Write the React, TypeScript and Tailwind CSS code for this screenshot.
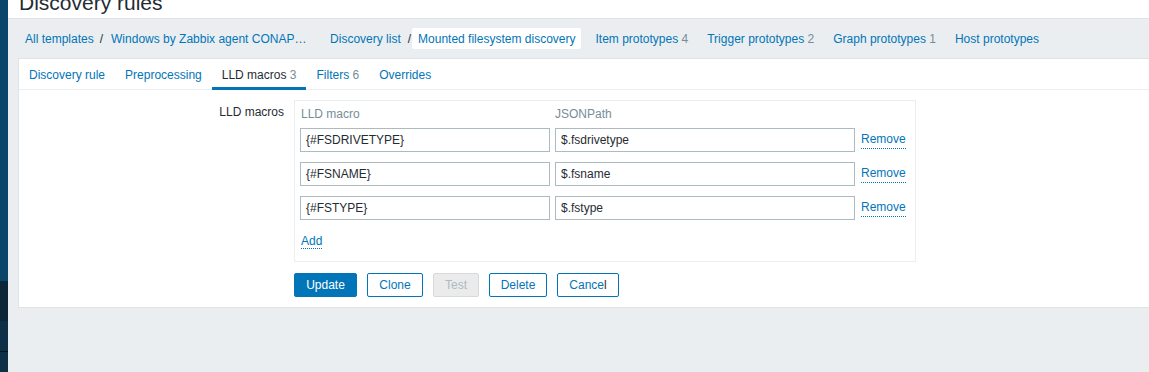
import React from "react";

const Count = ({ n }: { n: string }) => <span className="text-[#768d99]">{"\u00a0"}{n}</span>;

const rows = [
  { macro: "{#FSDRIVETYPE}", path: "$.fsdrivetype" },
  { macro: "{#FSNAME}", path: "$.fsname" },
  { macro: "{#FSTYPE}", path: "$.fstype" },
];

export default function App() {
  return (
    <div className="flex h-[372px] w-[1149px] overflow-hidden font-['Liberation_Sans',Arial,sans-serif] text-[12px] text-[#1f2c33]">
      <aside className="flex w-[8px] shrink-0 flex-col">
        <div className="h-[281px] bg-[#0a466a]" />
        <div className="h-[40px] bg-[#0a2637]" />
        <div className="h-[30px] bg-[#0d3048]" />
        <div className="h-[1px] bg-[#04121b]" />
        <div className="flex-1 bg-[#0d3048]" />
      </aside>
      <main className="flex min-w-0 flex-1 flex-col bg-[#ebeef0]">
        <header className="h-[19px] overflow-hidden border-b border-[#dfe4e7] bg-white pl-[11px]">
          <h1 className="mt-[-8px] whitespace-nowrap text-[21px] leading-[21px] text-[#1f2c33]">Discovery rules</h1>
        </header>
        <nav className="flex h-[39px] items-center whitespace-nowrap pl-[17px] leading-[18px] text-[#0275b8]">
          <span>All templates</span>
          <span className="ml-[6px] text-[#1f2c33]">/</span>
          <span className="ml-[8px] inline-block w-[195px] overflow-hidden">Windows by Zabbix agent CONAP…</span>
          <span className="ml-[24px]">Discovery list</span>
          <span className="ml-[7px] text-[#1f2c33]">/</span>
          <span className="ml-[1px] flex h-[21px] items-center rounded-[2px] bg-white px-[6px]">Mounted filesystem discovery</span>
          <span className="ml-[14px]">Item prototypes<Count n="4" /></span>
          <span className="ml-[19px]">Trigger prototypes<Count n="2" /></span>
          <span className="ml-[19px]">Graph prototypes<Count n="1" /></span>
          <span className="ml-[19px]">Host prototypes</span>
        </nav>
        <section className="ml-[10px] border-y border-l border-[#dfe4e7] bg-white pb-[10px]">
          <div className="flex border-b border-[#ebeef0] whitespace-nowrap">
            <div className="-mb-px flex h-[31px] items-center border-b-[3px] border-transparent px-[10px] pt-[3px] text-[#0275b8]">Discovery rule</div>
            <div className="-mb-px flex h-[31px] items-center border-b-[3px] border-transparent px-[10px] pt-[3px] text-[#0275b8]">Preprocessing</div>
            <div className="-mb-px flex h-[31px] items-center border-b-[3px] border-[#0275b8] px-[10px] pt-[3px] text-[#1f2c33]">LLD macros<Count n="3" /></div>
            <div className="-mb-px flex h-[31px] items-center border-b-[3px] border-transparent px-[10px] pt-[3px] text-[#0275b8]">Filters<Count n="6" /></div>
            <div className="-mb-px flex h-[31px] items-center border-b-[3px] border-transparent px-[10px] pt-[3px] text-[#0275b8]">Overrides</div>
          </div>
          <div className="flex pt-[10px]">
            <div className="w-[275px] shrink-0 pr-[10px] pt-[3px] text-right leading-[18px]">LLD macros</div>
            <div>
              <div className="w-[622px] border border-[#ebeef0] px-[5px]">
                <div className="flex h-[27px] pt-[4px] leading-[18px] text-[#768d99]">
                  <div className="w-[255px] pl-[1px]">LLD macro</div>
                  <div>JSONPath</div>
                </div>
                <div className="flex flex-col gap-[10px]">
                  {rows.map((r) => (
                    <div key={r.macro} className="flex items-center gap-[5px]">
                      <div className="flex h-[24px] w-[250px] items-center border border-[#acbbc2] px-[5px]">{r.macro}</div>
                      <div className="flex h-[24px] w-[300px] items-center border border-[#acbbc2] px-[5px]">{r.path}</div>
                      <span className="ml-[1px] mb-[2px] border-b border-dotted border-[#0275b8] text-[#0275b8]">Remove</span>
                    </div>
                  ))}
                </div>
                <div className="h-[41px] pt-[12px] pl-[1px] leading-[18px]">
                  <span className="border-b border-dotted border-[#0275b8] text-[#0275b8]">Add</span>
                </div>
              </div>
              <div className="mt-[11px] flex gap-[10px] leading-[18px]">
                <button className="h-[24px] w-[63px] rounded-[2px] border border-[#0275b8] bg-[#0275b8] text-white">Update</button>
                <button className="h-[24px] w-[56px] rounded-[2px] border border-[#0275b8] bg-white text-[#0275b8]">Clone</button>
                <button className="h-[24px] w-[46px] rounded-[2px] border border-[#d5dadd] bg-[#ebebeb] text-[#acbbc2]">Test</button>
                <button className="h-[24px] w-[58px] rounded-[2px] border border-[#0275b8] bg-white text-[#0275b8]">Delete</button>
                <button className="h-[24px] w-[62px] rounded-[2px] border border-[#0275b8] bg-white text-[#0275b8]">Cance<span className="text-[#1f2c33]">l</span></button>
              </div>
            </div>
          </div>
        </section>
      </main>
    </div>
  );
}
